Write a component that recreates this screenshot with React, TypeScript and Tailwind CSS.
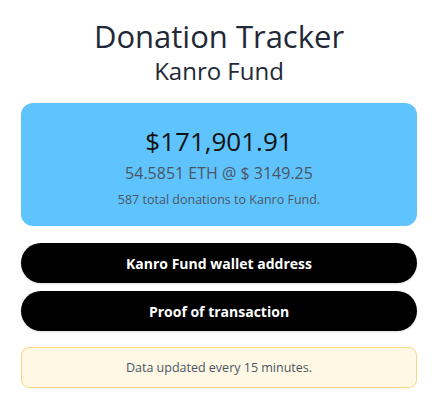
import React from "react";

export default function App() {
  return (
    <div className="min-h-screen bg-white px-[21px] pt-[16px] text-center font-['Open_Sans',sans-serif]">
      <h1 className="text-[31px] leading-[40px] font-medium text-[#1f2937]">
        Donation Tracker
      </h1>
      <h2 className="text-[24px] leading-[30px] text-[#1f2937]">Kanro Fund</h2>

      <div className="mt-[17px] rounded-xl bg-[#5fc4fd] pt-[18px] pb-[17px]">
        <div className="text-[26px] leading-[40px] text-[#111]">$171,901.91</div>
        <div className="text-[16px] leading-[24px] text-[#4b5563]">
          54.5851 ETH @ $ 3149.25
        </div>
        <div className="mt-[6px] text-[12.5px] leading-[18px] text-[#4b5563]">
          587 total donations to Kanro Fund.
        </div>
      </div>

      <div className="mt-[17px] flex flex-col gap-2">
        <button className="h-10 w-full rounded-full bg-black text-[14px] font-bold text-white shadow-sm">
          Kanro Fund wallet address
        </button>
        <button className="h-10 w-full rounded-full bg-black text-[14px] font-bold text-white shadow-sm">
          Proof of transaction
        </button>
      </div>

      <div className="mt-4 rounded-lg border border-[#f9d77f] bg-[#fef8e5] py-[10px] text-[12.5px] leading-[19px] text-[#4b5563]">
        Data updated every 15 minutes.
      </div>
    </div>
  );
}
